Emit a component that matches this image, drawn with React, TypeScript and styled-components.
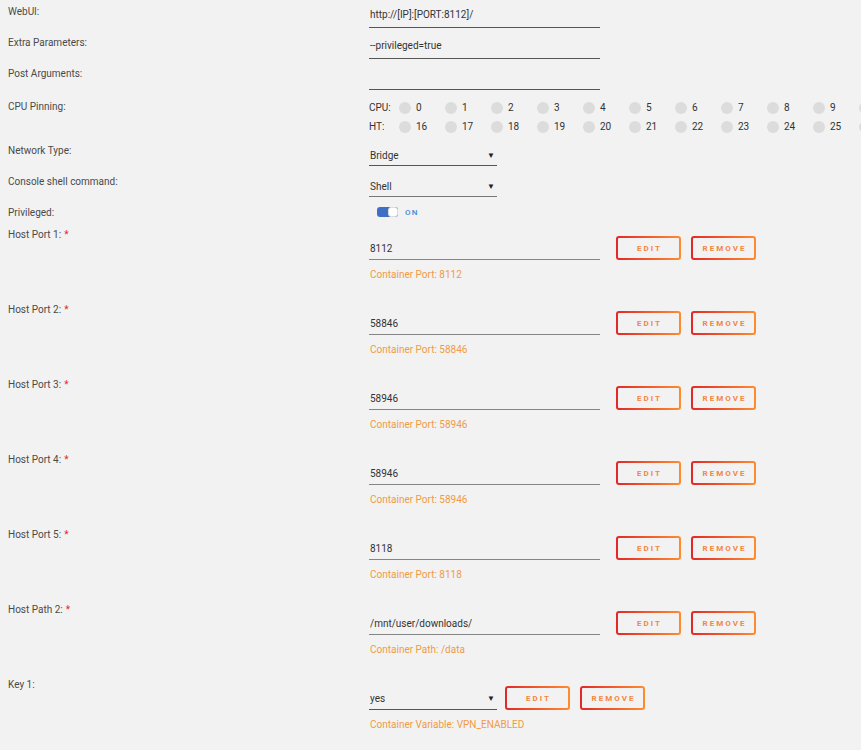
import React from "react";
import styled, { createGlobalStyle } from "styled-components";

const Global = createGlobalStyle`
  html, body { margin: 0; padding: 0; background: #f2f2f2; }
  body { font-family: Roboto, "Open Sans", sans-serif; font-size: 10px; color: #4a4a4a; }
  * { box-sizing: border-box; }
`;

const Page = styled.div`
  width: 100%;
  overflow: hidden;
`;

const Row = styled.div<{ $h: number }>`
  display: flex;
  align-items: flex-start;
  min-height: ${(p) => p.$h}px;
`;

const Label = styled.div<{ $pt?: number }>`
  width: 369px;
  flex: none;
  padding-left: 8px;
  padding-top: ${(p) => p.$pt ?? 5}px;
  line-height: 13px;
  color: #4a4a4a;
  white-space: nowrap;
`;

const Req = styled.span`
  color: #e22828;
  margin-left: 3px;
`;

const Content = styled.div<{ $pt?: number }>`
  padding-top: ${(p) => p.$pt ?? 0}px;
  flex: 1;
  min-width: 0;
`;

const TextField = styled.div<{ $w?: number; $h?: number; $pb?: number; $line?: string }>`
  width: ${(p) => p.$w ?? 231}px;
  height: ${(p) => p.$h ?? 28}px;
  border-bottom: 1px solid ${(p) => p.$line ?? "#555"};
  display: flex;
  align-items: flex-end;
  padding-left: 1px;
  padding-bottom: ${(p) => p.$pb ?? 6}px;
  color: #333;
  line-height: 13px;
`;

const SelectBox = styled(TextField)`
  justify-content: space-between;
  padding-right: 2px;
`;

const Arrow = styled.span`
  font-size: 8px;
  color: #222;
`;

const Pins = styled.div`
  padding-top: 5px;
  display: flex;
  flex-direction: column;
`;

const PinLine = styled.div`
  display: flex;
  align-items: center;
  height: 19px;
  white-space: nowrap;
`;

const PinHead = styled.span`
  width: 30px;
  flex: none;
  color: #333;
`;

const Pin = styled.span`
  width: 46px;
  flex: none;
  display: flex;
  align-items: center;
  gap: 5px;
  color: #333;
`;

const Dot = styled.span`
  width: 12px;
  height: 12px;
  border-radius: 50%;
  background: #dcdcdc;
  flex: none;
`;

const ToggleWrap = styled.div`
  display: flex;
  align-items: center;
  gap: 7px;
  padding-left: 8px;
  padding-top: 6px;
`;

const Track = styled.span`
  width: 21px;
  height: 10px;
  border-radius: 3px;
  background: #3f6fc4;
  position: relative;
  display: inline-block;
`;

const Knob = styled.span`
  position: absolute;
  right: 0;
  top: 0;
  width: 10px;
  height: 10px;
  border-radius: 3px;
  background: #fff;
  border: 1px solid #dcdcdc;
`;

const OnText = styled.span`
  font-size: 8px;
  font-weight: 500;
  letter-spacing: 1.2px;
  color: #3a8cd6;
`;

const FieldLine = styled.div<{ $gap: number }>`
  display: flex;
  align-items: flex-end;
  gap: ${(p) => p.$gap}px;
`;

const Buttons = styled.div`
  display: flex;
  gap: 10px;
`;

const Btn = styled.span`
  width: 65px;
  height: 24px;
  display: flex;
  align-items: center;
  justify-content: center;
  border: 2px solid transparent;
  border-radius: 3px;
  background: linear-gradient(#f2f2f2, #f2f2f2) padding-box,
    linear-gradient(90deg, #e22828, #ff8c2f) border-box;
  font-size: 8px;
  font-weight: 700;
  letter-spacing: 2px;
  color: #f4863e;
  padding-left: 2px;
`;

const Note = styled.div`
  margin-top: 8px;
  line-height: 13px;
  color: #f09a46;
  padding-left: 1px;
`;

const cpu = Array.from({ length: 10 }, (_, i) => i);

type PortProps = { label: string; value: string; note: string };

const PortBlock = ({ label, value, note }: PortProps) => (
  <Row $h={75}>
    <Label $pt={6}>
      {label}
      <Req>*</Req>
    </Label>
    <Content $pt={14}>
      <FieldLine $gap={16}>
        <TextField $h={24} $pb={4} $line="#858585">
          {value}
        </TextField>
        <Buttons>
          <Btn>EDIT</Btn>
          <Btn>REMOVE</Btn>
        </Buttons>
      </FieldLine>
      <Note>{note}</Note>
    </Content>
  </Row>
);

export default function App() {
  return (
    <Page>
      <Global />
      <Row $h={31}>
        <Label>WebUI:</Label>
        <Content>
          <TextField>http://[IP]:[PORT:8112]/</TextField>
        </Content>
      </Row>
      <Row $h={31}>
        <Label>Extra Parameters:</Label>
        <Content>
          <TextField>--privileged=true</TextField>
        </Content>
      </Row>
      <Row $h={31}>
        <Label>Post Arguments:</Label>
        <Content>
          <TextField />
        </Content>
      </Row>
      <Row $h={46}>
        <Label $pt={7}>CPU Pinning:</Label>
        <Content>
          <Pins>
            <PinLine>
              <PinHead>CPU:</PinHead>
              {cpu.map((n) => (
                <Pin key={n}>
                  <Dot />
                  {n}
                </Pin>
              ))}
              <Dot />
            </PinLine>
            <PinLine>
              <PinHead>HT:</PinHead>
              {cpu.map((n) => (
                <Pin key={n}>
                  <Dot />
                  {n + 16}
                </Pin>
              ))}
              <Dot />
            </PinLine>
          </Pins>
        </Content>
      </Row>
      <Row $h={31}>
        <Label>Network Type:</Label>
        <Content>
          <SelectBox $w={128} $h={27} $pb={3}>
            Bridge<Arrow>▼</Arrow>
          </SelectBox>
        </Content>
      </Row>
      <Row $h={31}>
        <Label>Console shell command:</Label>
        <Content>
          <SelectBox $w={128} $h={27} $pb={3} $line="#777">
            Shell<Arrow>▼</Arrow>
          </SelectBox>
        </Content>
      </Row>
      <Row $h={21}>
        <Label>Privileged:</Label>
        <Content>
          <ToggleWrap>
            <Track>
              <Knob />
            </Track>
            <OnText>ON</OnText>
          </ToggleWrap>
        </Content>
      </Row>
      <PortBlock label="Host Port 1:" value="8112" note="Container Port: 8112" />
      <PortBlock label="Host Port 2:" value="58846" note="Container Port: 58846" />
      <PortBlock label="Host Port 3:" value="58946" note="Container Port: 58946" />
      <PortBlock label="Host Port 4:" value="58946" note="Container Port: 58946" />
      <PortBlock label="Host Port 5:" value="8118" note="Container Port: 8118" />
      <PortBlock label="Host Path 2:" value="/mnt/user/downloads/" note="Container Path: /data" />
      <Row $h={75}>
        <Label $pt={6}>Key 1:</Label>
        <Content $pt={14}>
          <FieldLine $gap={8}>
            <SelectBox $w={128} $h={24} $pb={4} $line="#555">
              yes<Arrow>▼</Arrow>
            </SelectBox>
            <Buttons>
              <Btn>EDIT</Btn>
              <Btn>REMOVE</Btn>
            </Buttons>
          </FieldLine>
          <Note>Container Variable: VPN_ENABLED</Note>
        </Content>
      </Row>
    </Page>
  );
}
